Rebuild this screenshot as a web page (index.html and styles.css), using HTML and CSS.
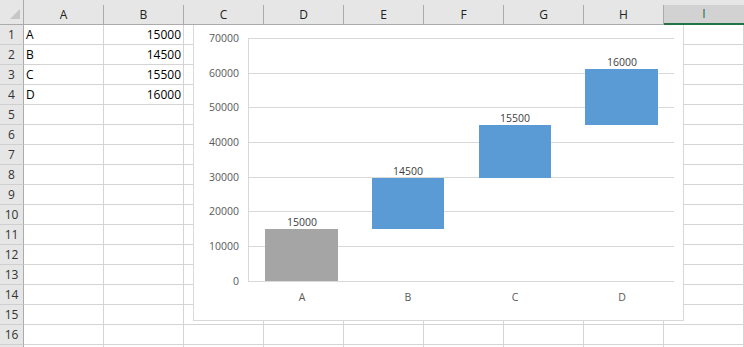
FILE: index.html
```html
<!DOCTYPE html>
<html>
<head>
<meta charset="utf-8">
<link rel="stylesheet" href="styles.css">
</head>
<body>
<div class="sheet">
  <div class="hdr-row">
    <div class="corner"><span class="tri"></span></div>
    <div class="col-h">A</div>
    <div class="col-h">B</div>
    <div class="col-h">C</div>
    <div class="col-h">D</div>
    <div class="col-h">E</div>
    <div class="col-h">F</div>
    <div class="col-h">G</div>
    <div class="col-h">H</div>
    <div class="col-h sel">I</div>
  </div>
  <div class="grid" id="grid">
    <div class="row"><div class="row-h">1</div><div class="cell">A</div><div class="cell num">15000</div><div class="cell"></div><div class="cell"></div><div class="cell"></div><div class="cell"></div><div class="cell"></div><div class="cell"></div><div class="cell"></div></div>
    <div class="row"><div class="row-h">2</div><div class="cell">B</div><div class="cell num">14500</div><div class="cell"></div><div class="cell"></div><div class="cell"></div><div class="cell"></div><div class="cell"></div><div class="cell"></div><div class="cell"></div></div>
    <div class="row"><div class="row-h">3</div><div class="cell">C</div><div class="cell num">15500</div><div class="cell"></div><div class="cell"></div><div class="cell"></div><div class="cell"></div><div class="cell"></div><div class="cell"></div><div class="cell"></div></div>
    <div class="row"><div class="row-h">4</div><div class="cell">D</div><div class="cell num">16000</div><div class="cell"></div><div class="cell"></div><div class="cell"></div><div class="cell"></div><div class="cell"></div><div class="cell"></div><div class="cell"></div></div>
    <div class="row"><div class="row-h">5</div><div class="cell"></div><div class="cell"></div><div class="cell"></div><div class="cell"></div><div class="cell"></div><div class="cell"></div><div class="cell"></div><div class="cell"></div><div class="cell"></div></div>
    <div class="row"><div class="row-h">6</div><div class="cell"></div><div class="cell"></div><div class="cell"></div><div class="cell"></div><div class="cell"></div><div class="cell"></div><div class="cell"></div><div class="cell"></div><div class="cell"></div></div>
    <div class="row"><div class="row-h">7</div><div class="cell"></div><div class="cell"></div><div class="cell"></div><div class="cell"></div><div class="cell"></div><div class="cell"></div><div class="cell"></div><div class="cell"></div><div class="cell"></div></div>
    <div class="row"><div class="row-h">8</div><div class="cell"></div><div class="cell"></div><div class="cell"></div><div class="cell"></div><div class="cell"></div><div class="cell"></div><div class="cell"></div><div class="cell"></div><div class="cell"></div></div>
    <div class="row"><div class="row-h">9</div><div class="cell"></div><div class="cell"></div><div class="cell"></div><div class="cell"></div><div class="cell"></div><div class="cell"></div><div class="cell"></div><div class="cell"></div><div class="cell"></div></div>
    <div class="row"><div class="row-h">10</div><div class="cell"></div><div class="cell"></div><div class="cell"></div><div class="cell"></div><div class="cell"></div><div class="cell"></div><div class="cell"></div><div class="cell"></div><div class="cell"></div></div>
    <div class="row"><div class="row-h">11</div><div class="cell"></div><div class="cell"></div><div class="cell"></div><div class="cell"></div><div class="cell"></div><div class="cell"></div><div class="cell"></div><div class="cell"></div><div class="cell"></div></div>
    <div class="row"><div class="row-h">12</div><div class="cell"></div><div class="cell"></div><div class="cell"></div><div class="cell"></div><div class="cell"></div><div class="cell"></div><div class="cell"></div><div class="cell"></div><div class="cell"></div></div>
    <div class="row"><div class="row-h">13</div><div class="cell"></div><div class="cell"></div><div class="cell"></div><div class="cell"></div><div class="cell"></div><div class="cell"></div><div class="cell"></div><div class="cell"></div><div class="cell"></div></div>
    <div class="row"><div class="row-h">14</div><div class="cell"></div><div class="cell"></div><div class="cell"></div><div class="cell"></div><div class="cell"></div><div class="cell"></div><div class="cell"></div><div class="cell"></div><div class="cell"></div></div>
    <div class="row"><div class="row-h">15</div><div class="cell"></div><div class="cell"></div><div class="cell"></div><div class="cell"></div><div class="cell"></div><div class="cell"></div><div class="cell"></div><div class="cell"></div><div class="cell"></div></div>
    <div class="row"><div class="row-h">16</div><div class="cell"></div><div class="cell"></div><div class="cell"></div><div class="cell"></div><div class="cell"></div><div class="cell"></div><div class="cell"></div><div class="cell"></div><div class="cell"></div></div>
    <div class="row"><div class="row-h"></div><div class="cell"></div><div class="cell"></div><div class="cell"></div><div class="cell"></div><div class="cell"></div><div class="cell"></div><div class="cell"></div><div class="cell"></div><div class="cell"></div></div>
  </div>

  <div class="chart">
    <svg class="plot" width="491" height="311" viewBox="193 10 491 311" xmlns="http://www.w3.org/2000/svg">
      <g class="gridlines" stroke="#d9d9d9" stroke-width="1" shape-rendering="crispEdges">
        <line x1="248" y1="38.5" x2="674" y2="38.5"/>
        <line x1="248" y1="73.5" x2="674" y2="73.5"/>
        <line x1="248" y1="107.5" x2="674" y2="107.5"/>
        <line x1="248" y1="142.5" x2="674" y2="142.5"/>
        <line x1="248" y1="177.5" x2="674" y2="177.5"/>
        <line x1="248" y1="211.5" x2="674" y2="211.5"/>
        <line x1="248" y1="246.5" x2="674" y2="246.5"/>
        <line x1="248" y1="281.5" x2="674" y2="281.5"/>
        <line x1="248.5" y1="38" x2="248.5" y2="282"/>
      </g>
      <g class="ylabels">
        <text x="239" y="42">70000</text>
        <text x="239" y="77">60000</text>
        <text x="239" y="111">50000</text>
        <text x="239" y="146">40000</text>
        <text x="239" y="181">30000</text>
        <text x="239" y="215">20000</text>
        <text x="239" y="250">10000</text>
        <text x="239" y="285">0</text>
      </g>
      <g shape-rendering="crispEdges">
        <rect x="265" y="229" width="73" height="52" fill="#a5a5a5"/>
        <rect x="372" y="178" width="72" height="51" fill="#5b9bd5"/>
        <rect x="479" y="125" width="72" height="53" fill="#5b9bd5"/>
        <rect x="585" y="69" width="73" height="56" fill="#5b9bd5"/>
      </g>
      <g class="dlabels">
        <text x="302" y="226">15000</text>
        <text x="408" y="175">14500</text>
        <text x="515" y="122">15500</text>
        <text x="622" y="66">16000</text>
      </g>
      <g class="xlabels">
        <text x="302" y="301">A</text>
        <text x="408" y="301">B</text>
        <text x="515" y="301">C</text>
        <text x="622" y="301">D</text>
      </g>
    </svg>
  </div>
</div>
</body>
</html>
```

FILE: styles.css
```css
html, body {
  margin: 0;
  padding: 0;
  background: #ffffff;
  overflow: hidden;
}

.sheet {
  position: relative;
  width: 744px;
  height: 347px;
  overflow: hidden;
  font-family: "Open Sans", "Liberation Sans", sans-serif;
  font-size: 12px;
  color: #000;
}

.hdr-row {
  position: relative;
  z-index: 3;
  display: grid;
  grid-template-columns: 24px repeat(9, 80px);
  height: 25px;
  padding-top: 5px;
  box-sizing: border-box;
  background: #e6e6e6;
  border-bottom: 1px solid #ababab;
}

.corner {
  position: relative;
  border-right: 1px solid #ababab;
  margin-top: -5px;
}

.tri {
  position: absolute;
  right: 3px;
  bottom: 5px;
  width: 0;
  height: 0;
  border-left: 10px solid transparent;
  border-bottom: 10px solid #c6c6c6;
}

.col-h {
  border-right: 1px solid #ababab;
  display: flex;
  align-items: center;
  justify-content: center;
  color: #222;
  font-size: 12px;
  line-height: 1;
}

.col-h.sel {
  background: #d2d2d2;
  color: #1d6b40;
  border-right: none;
  border-bottom: 2px solid #217346;
  margin-bottom: -1px;
}

.grid {
  display: flex;
  flex-direction: column;
}

.row {
  display: grid;
  grid-template-columns: 24px repeat(9, 80px);
  height: 20px;
}

.row-h {
  background: #e6e6e6;
  border-right: 1px solid #ababab;
  border-bottom: 1px solid #cfcfcf;
  display: flex;
  align-items: center;
  justify-content: center;
  color: #333;
  font-size: 12px;
  line-height: 1;
}

.cell {
  border-right: 1px solid #d4d4d4;
  border-bottom: 1px solid #d4d4d4;
  display: flex;
  align-items: center;
  padding: 0 2px;
  line-height: 1;
  white-space: nowrap;
}

.cell.num {
  justify-content: flex-end;
}

.chart {
  position: absolute;
  left: 193px;
  top: 10px;
  width: 491px;
  height: 311px;
  box-sizing: border-box;
  background: #ffffff;
  border: 1px solid #d9d9d9;
  z-index: 2;
}

.plot {
  position: absolute;
  left: -1px;
  top: -1px;
  display: block;
}

.plot text {
  font-family: "Open Sans", "Liberation Sans", sans-serif;
  font-size: 10.5px;
  fill: #595959;
}

.ylabels text {
  text-anchor: end;
}

.dlabels text,
.xlabels text {
  text-anchor: middle;
}

.dlabels text {
  fill: #404040;
}
```
